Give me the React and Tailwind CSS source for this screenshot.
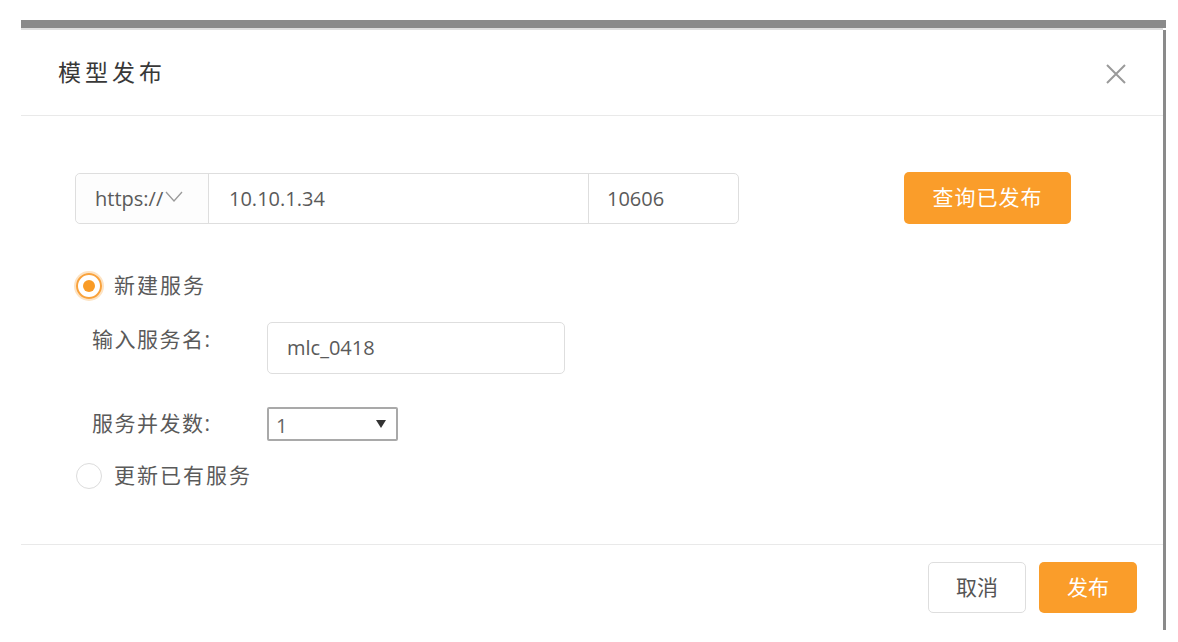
import React from "react";

const FONT = { fontFamily: '"Open Sans", "Noto Sans CJK SC", sans-serif' };

function Radio({ checked, label }) {
  return (
    <div className="flex items-center h-[30px]">
      {checked ? (
        <div className="w-[26px] h-[26px] rounded-full border-2 border-[#f9a23c] shadow-[0_0_0_2px_#fde3c3] flex items-center justify-center">
          <div className="w-[12px] h-[12px] rounded-full bg-[#f99b26]"></div>
        </div>
      ) : (
        <div className="w-[26px] h-[26px] rounded-full border-[1.5px] border-[#dcdcdc] bg-white"></div>
      )}
      <span className="ml-[12px] text-[21px] text-[#5a5a5a] tracking-[2px]">{label}</span>
    </div>
  );
}

export default function App() {
  return (
    <div className="w-full h-[642px] bg-white pt-[20px] pl-[21px]" style={FONT}>
      <div className="w-[1145px]">
        <div className="h-[8px] bg-[#8a8a8a]"></div>
        <div className="h-[2px] bg-[#dedede] mr-[3px]"></div>
        <div className="border-r-[3px] border-[#8a8a8a] h-[600px] flex flex-col">
          {/* header */}
          <div className="h-[86px] border-b border-[#e9e9e9] flex items-center justify-between pl-[37px] pr-[36px] shrink-0">
            <h2 className="text-[23px] text-[#383838] tracking-[4px]">模型发布</h2>
            <svg width="22" height="22" viewBox="0 0 22 22" className="mt-[2px]">
              <path d="M2 2 L20 20 M20 2 L2 20" stroke="#9a9a9a" strokeWidth="2" fill="none" />
            </svg>
          </div>

          {/* body */}
          <div className="flex-1 pl-[54px] pt-[57px] pr-[92px]">
            <div className="flex items-start justify-between">
              <div className="flex h-[51px] w-[664px] border border-[#dedede] rounded-[5px] text-[20px] text-[#5a5a5a]">
                <div className="w-[133px] flex items-center pl-[19px] border-r border-[#dedede] bg-[#fdfdfd] rounded-l-[5px]">
                  <span>https://</span>
                  <svg width="18" height="12" viewBox="0 0 18 12" className="ml-[2px] mb-[4px]">
                    <path d="M1 1 L9 10 L17 1" stroke="#9a9a9a" strokeWidth="1.3" fill="none" />
                  </svg>
                </div>
                <div className="w-[380px] flex items-center pl-[20px] border-r border-[#dedede]">10.10.1.34</div>
                <div className="flex-1 flex items-center pl-[18px]">10606</div>
              </div>
              <button className="w-[167px] h-[52px] -mt-[1px] rounded-[5px] bg-[#fa9d2a] text-white text-[21px] tracking-[1px]">
                查询已发布
              </button>
            </div>

            <div className="mt-[47px] ml-[1px]">
              <Radio checked label="新建服务" />
            </div>

            <div className="flex items-start mt-[21px] ml-[17px]">
              <span className="w-[175px] text-[21px] text-[#5a5a5a] pt-[2px] tracking-[1.5px]">输入服务名:</span>
              <div className="w-[298px] h-[52px] border border-[#dedede] rounded-[5px] flex items-center pl-[19px] text-[20px] text-[#5a5a5a]">
                mlc_0418
              </div>
            </div>

            <div className="flex items-center mt-[33px] ml-[17px]">
              <span className="w-[175px] text-[21px] text-[#5a5a5a] tracking-[1.5px]">服务并发数:</span>
              <div className="w-[131px] h-[34px] border-2 border-[#a9a9a9] rounded-[2px] flex items-center justify-between pl-[7px] pr-[10px] text-[20px] text-[#666]">
                <span className="pt-[3px]">1</span>
                <svg width="10" height="10" viewBox="0 0 10 10">
                  <path d="M0 1 L10 1 L5 9 Z" fill="#333" />
                </svg>
              </div>
            </div>

            <div className="mt-[20px] ml-[1px]">
              <Radio label="更新已有服务" />
            </div>
          </div>

          {/* footer */}
          <div className="h-[86px] border-t border-[#e9e9e9] flex justify-end items-start pt-[17px] pr-[26px] gap-[13px] shrink-0">
            <button className="w-[98px] h-[51px] border border-[#dedede] rounded-[5px] bg-white text-[21px] text-[#555]">
              取消
            </button>
            <button className="w-[98px] h-[51px] rounded-[5px] bg-[#fa9d2a] text-white text-[21px]">
              发布
            </button>
          </div>
        </div>
      </div>
    </div>
  );
}
